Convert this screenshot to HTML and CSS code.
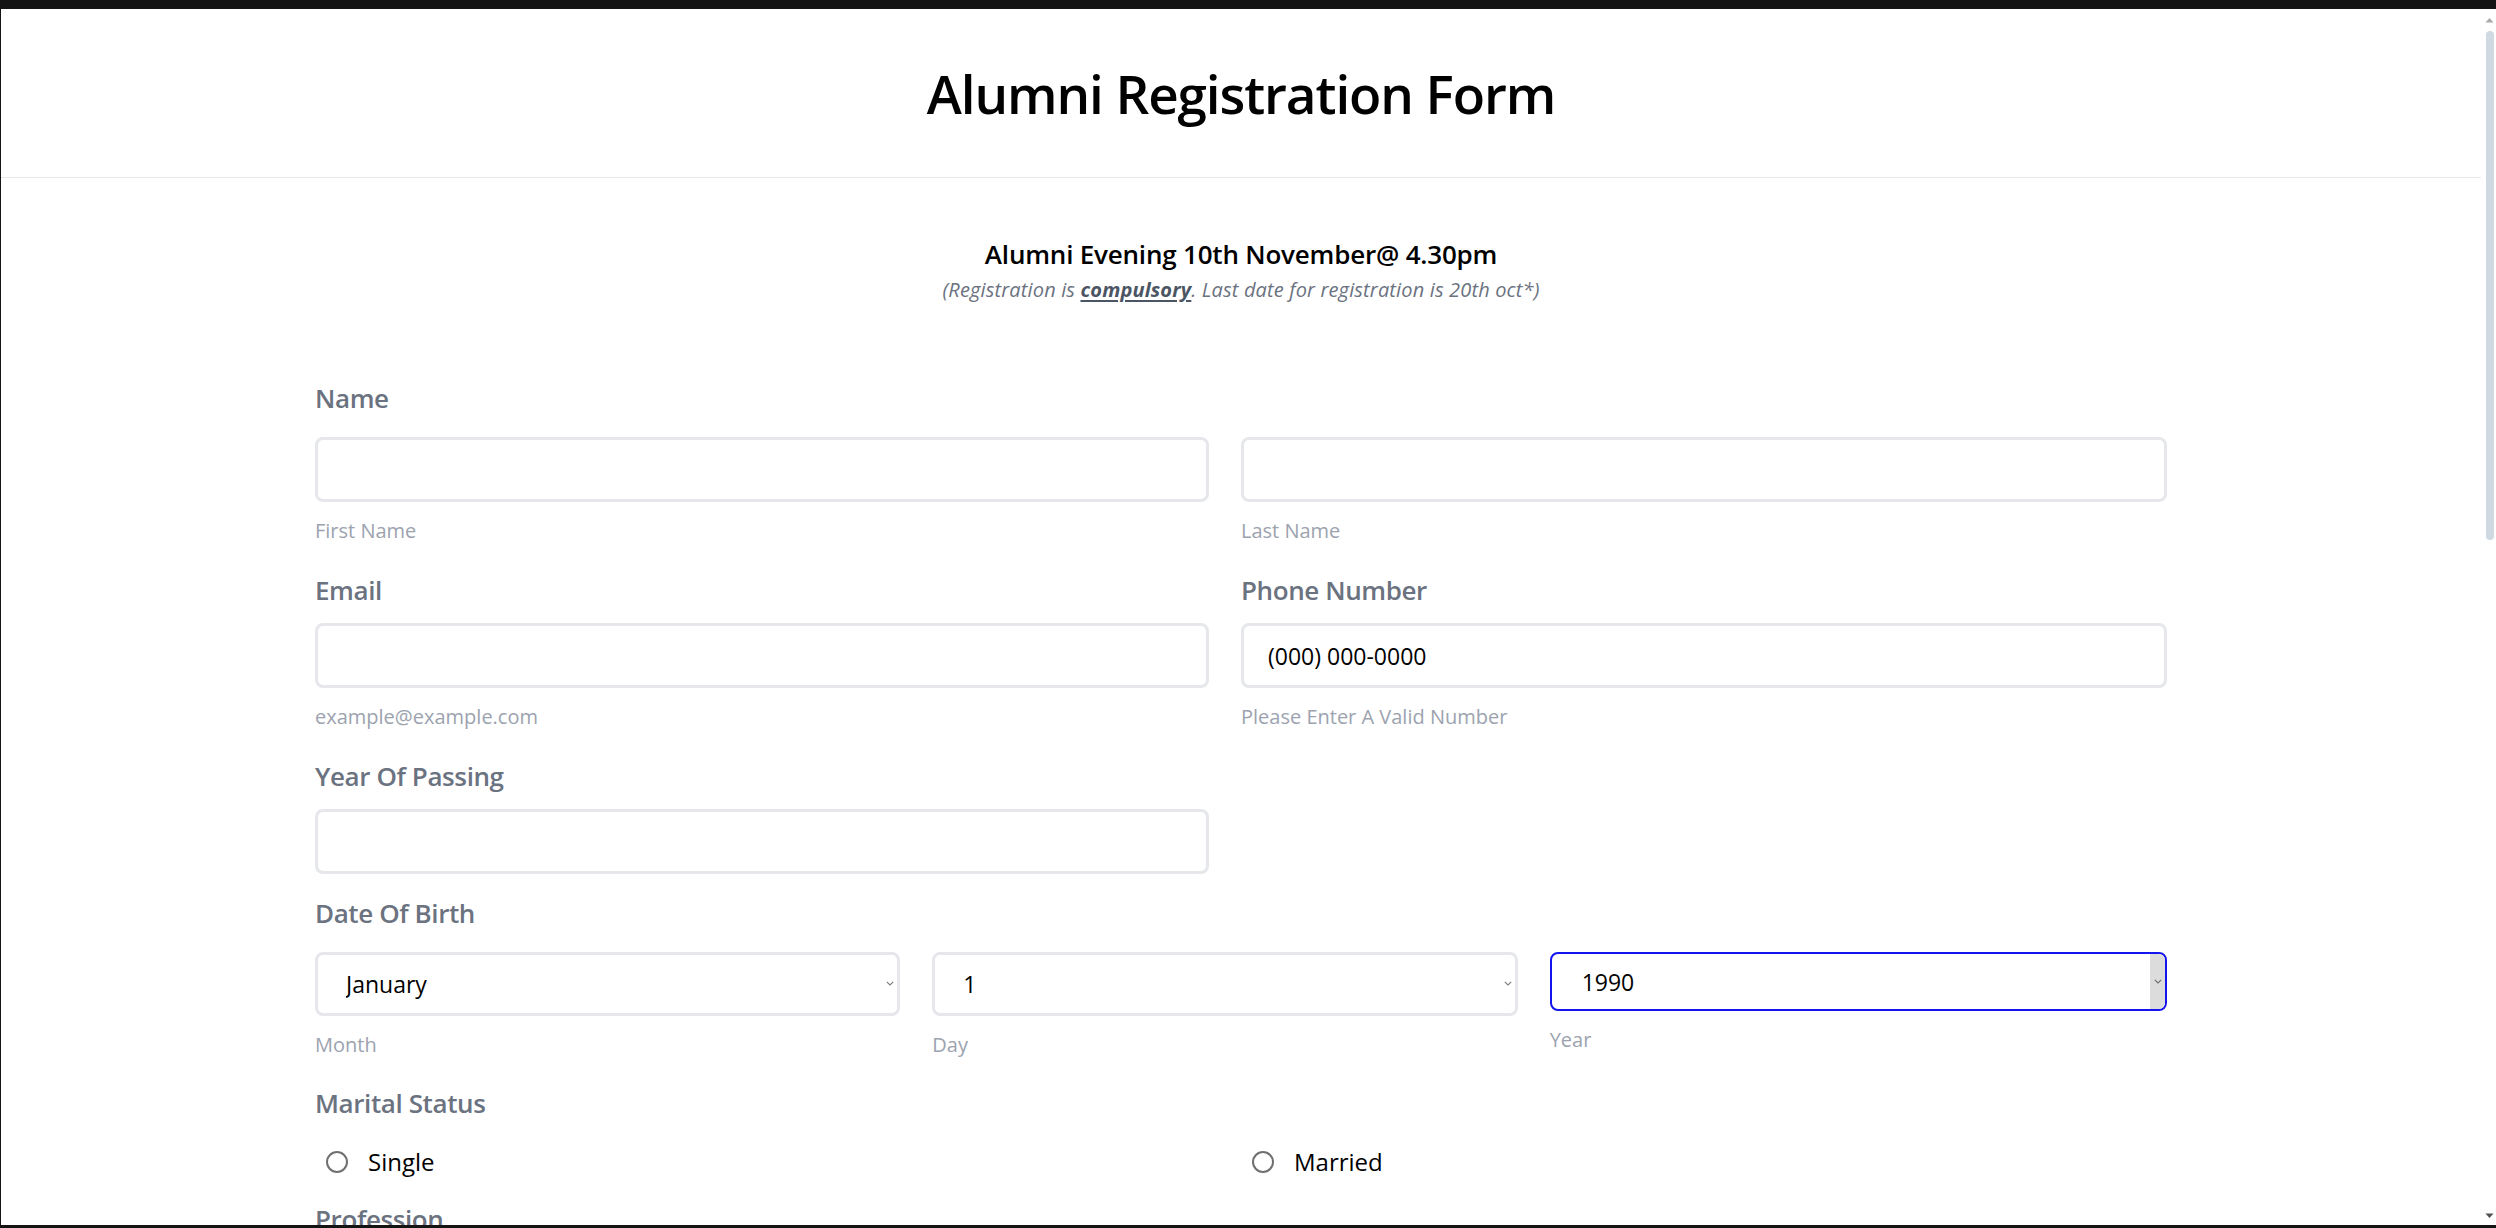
FILE: index.html
```html
<!DOCTYPE html>
<html lang="en">
<head>
<meta charset="utf-8">
<title>Alumni Registration Form</title>
<link rel="stylesheet" href="styles.css">
</head>
<body>
<div class="window">
  <div class="viewport">
    <div class="page">
      <header class="page-header">
        <h1 class="page-title">Alumni Registration Form</h1>
      </header>
      <main class="content">
        <div class="intro">
          <h2 class="intro-title">Alumni Evening 10th November@ 4.30pm</h2>
          <p class="intro-note">(Registration is <strong class="intro-strong">compulsory</strong>. Last date for registration is 20th oct*)</p>
        </div>
        <form class="form">
          <section class="group">
            <div class="label">Name</div>
            <div class="cols cols-2 gap-lg">
              <div class="cell">
                <input class="input" type="text" aria-label="First Name">
                <span class="hint">First Name</span>
              </div>
              <div class="cell">
                <input class="input" type="text" aria-label="Last Name">
                <span class="hint">Last Name</span>
              </div>
            </div>
          </section>

          <section class="group cols cols-2">
            <div class="cell">
              <label class="label" for="email">Email</label>
              <input class="input gap-sm" id="email" type="email">
              <span class="hint">example@example.com</span>
            </div>
            <div class="cell">
              <label class="label" for="phone">Phone Number</label>
              <input class="input gap-sm" id="phone" type="tel" value="(000) 000-0000">
              <span class="hint">Please Enter A Valid Number</span>
            </div>
          </section>

          <section class="group cols cols-2">
            <div class="cell">
              <label class="label" for="yop">Year Of Passing</label>
              <input class="input gap-sm" id="yop" type="text">
            </div>
          </section>

          <section class="group group-dob">
            <div class="label">Date Of Birth</div>
            <div class="cols cols-3 gap-lg">
              <div class="cell">
                <div class="select-wrap">
                  <select class="select" aria-label="Month"><option>January</option></select>
                  <svg class="chev" width="8" height="5" viewBox="0 0 8 5"><path d="M0.8 0.8 L4 4 L7.2 0.8" fill="none" stroke="#7a7a7a" stroke-width="1.1"/></svg>
                </div>
                <span class="hint">Month</span>
              </div>
              <div class="cell">
                <div class="select-wrap">
                  <select class="select" aria-label="Day"><option>1</option></select>
                  <svg class="chev" width="8" height="5" viewBox="0 0 8 5"><path d="M0.8 0.8 L4 4 L7.2 0.8" fill="none" stroke="#7a7a7a" stroke-width="1.1"/></svg>
                </div>
                <span class="hint">Day</span>
              </div>
              <div class="cell">
                <div class="select-wrap select-focus">
                  <select class="select select-year" aria-label="Year"><option>1990</option></select>
                  <span class="drop-btn"></span>
                  <svg class="chev chev-year" width="8" height="5" viewBox="0 0 8 5"><path d="M0.8 0.8 L4 4 L7.2 0.8" fill="none" stroke="#6a6a6a" stroke-width="1.1"/></svg>
                </div>
                <span class="hint">Year</span>
              </div>
            </div>
          </section>

          <section class="group group-marital">
            <div class="label">Marital Status</div>
            <div class="cols cols-2 radios">
              <label class="radio"><input type="radio" name="marital" class="radio-input"><span>Single</span></label>
              <label class="radio"><input type="radio" name="marital" class="radio-input"><span>Married</span></label>
            </div>
          </section>

          <section class="group group-prof">
            <div class="label">Profession</div>
            <div class="cols cols-2 gap-lg">
              <div class="cell"><input class="input" type="text" aria-label="Profession"></div>
            </div>
          </section>
        </form>
      </main>
    </div>
    <div class="scrollbar">
      <svg class="sb-up" width="9" height="6" viewBox="0 0 9 6"><path d="M0.5 5.5 L4.5 1 L8.5 5.5 Z" fill="#a9a9a9"/></svg>
      <div class="sb-thumb"></div>
      <div class="sb-space"></div>
      <svg class="sb-down" width="9" height="6" viewBox="0 0 9 6"><path d="M0.5 0.5 L4.5 5 L8.5 0.5 Z" fill="#505050"/></svg>
    </div>
  </div>
</div>
</body>
</html>
```

FILE: styles.css
```css
* {
  box-sizing: border-box;
}

html,
body {
  margin: 0;
  padding: 0;
}

body {
  background: #141414;
  font-family: "Open Sans", "Noto Sans", "Liberation Sans", sans-serif;
  overflow: hidden;
}

.window {
  width: 2496px;
  height: 1228px;
  padding: 9px 0 3px 1px;
  display: flex;
}

.viewport {
  flex: 1;
  display: flex;
  background: #ffffff;
  overflow: hidden;
}

.page {
  flex: 1;
  min-width: 0;
  overflow: hidden;
}

/* header */
.page-header {
  height: 169px;
  border-bottom: 1px solid #e5e7eb;
  padding-top: 49px;
  text-align: center;
}

.page-title {
  margin: 0;
  font-size: 53px;
  line-height: 72px;
  font-weight: 600;
  color: #000000;
  letter-spacing: -1.1px;
}

/* intro */
.content {
  padding-top: 58px;
}

.intro {
  text-align: center;
}

.intro-title {
  margin: 0;
  font-size: 26px;
  line-height: 36px;
  font-weight: 600;
  color: #000000;
  letter-spacing: -0.2px;
}

.intro-note {
  margin: 4px 0 0;
  font-size: 20px;
  line-height: 28px;
  font-style: italic;
  color: #6b7280;
  letter-spacing: 0.15px;
}

.intro-strong {
  font-weight: 700;
  color: #4b5563;
  text-decoration: underline;
  text-decoration-thickness: 2px;
  text-underline-offset: 3px;
}

/* form */
.form {
  width: 1852px;
  margin: 76px auto 0;
}

.group + .group {
  margin-top: 27px;
}

.group.group-dob {
  margin-top: 21px;
}

.group.group-marital {
  margin-top: 26px;
}

.group.group-prof {
  margin-top: 22px;
}

.label {
  display: block;
  font-size: 26px;
  line-height: 36px;
  font-weight: 600;
  color: #6b7280;
  letter-spacing: -0.4px;
}

.cols {
  display: grid;
}

.cols-2 {
  grid-template-columns: 1fr 1fr;
}

.cols-3 {
  grid-template-columns: 1fr 1fr 1fr;
}

.cell {
  padding-right: 32px;
  min-width: 0;
}

.cell:last-child {
  padding-right: 0;
}

.cols-2 > .cell:only-child {
  padding-right: 32px;
}

.gap-lg {
  margin-top: 21px;
}

.gap-sm {
  margin-top: 15px;
}

.input {
  display: block;
  width: 100%;
  height: 65px;
  border: 3px solid #e5e7eb;
  border-radius: 8px;
  padding: 0 24px;
  font-family: inherit;
  font-size: 23px;
  color: #000000;
  background: #ffffff;
  outline: none;
}

.hint {
  display: block;
  margin-top: 15px;
  font-size: 20px;
  line-height: 28px;
  font-weight: 500;
  color: #9ca3af;
}

/* selects */
.select-wrap {
  position: relative;
}

.select {
  display: block;
  width: 100%;
  height: 64px;
  border: 3px solid #e5e7eb;
  border-radius: 8px;
  padding: 0 28px;
  font-family: inherit;
  font-size: 23px;
  color: #000000;
  background: #ffffff;
  appearance: none;
  -webkit-appearance: none;
  outline: none;
}

.select-year {
  height: 59px;
  border: 2px solid #1414f0;
  border-radius: 8px;
  padding: 0 30px;
}

.chev {
  position: absolute;
  right: 6px;
  top: 29px;
}

.drop-btn {
  position: absolute;
  right: 2px;
  top: 2px;
  bottom: 2px;
  width: 15px;
  background: #dcdcdc;
  border-radius: 0 6px 6px 0;
}

.chev.chev-year {
  right: 5px;
  top: 27px;
}

/* radios */
.radios {
  margin-top: 24px;
}

.radio {
  display: flex;
  align-items: center;
  height: 34px;
  padding-left: 11px;
  font-size: 24px;
  line-height: 34px;
  color: #000000;
}

.radio-input {
  appearance: none;
  -webkit-appearance: none;
  width: 22px;
  height: 22px;
  margin: 0 20px 0 0;
  border: 2px solid #707070;
  border-radius: 50%;
  background: #ffffff;
  flex: none;
}

/* scrollbar */
.scrollbar {
  width: 15px;
  flex: none;
  display: flex;
  flex-direction: column;
  align-items: center;
  background: #ffffff;
  padding: 8px 0 6px;
}

.sb-up {
  display: block;
  margin-left: 1px;
}

.sb-thumb {
  width: 8px;
  height: 509px;
  margin-top: 8px;
  margin-left: 2px;
  border-radius: 4px;
  background: #d0d9e1;
}

.sb-space {
  flex: 1;
}

.sb-down {
  display: block;
  margin-left: 2px;
}
```
